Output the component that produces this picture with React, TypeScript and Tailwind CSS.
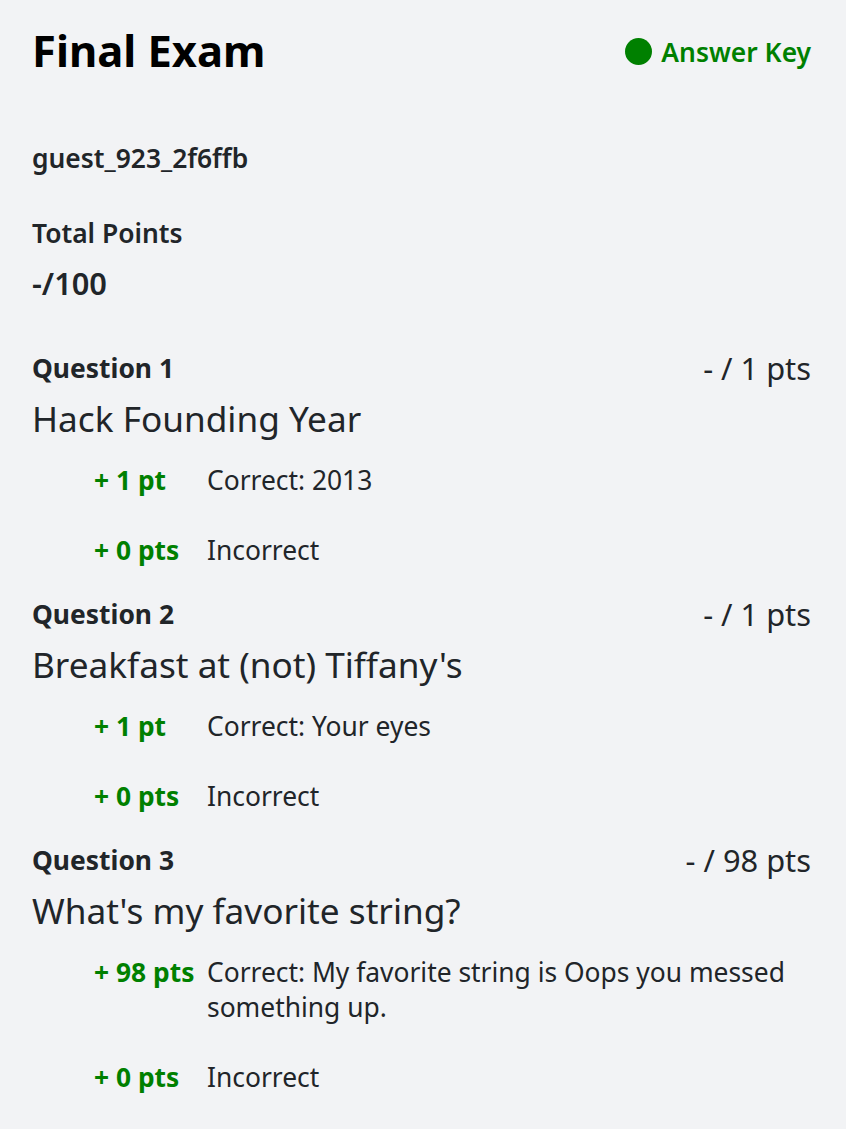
const questions = [
  {
    label: 'Question 1',
    title: 'Hack Founding Year',
    max: '1',
    options: [
      { pts: '+ 1 pt', text: 'Correct: 2013' },
      { pts: '+ 0 pts', text: 'Incorrect' },
    ],
  },
  {
    label: 'Question 2',
    title: "Breakfast at (not) Tiffany's",
    max: '1',
    options: [
      { pts: '+ 1 pt', text: 'Correct: Your eyes' },
      { pts: '+ 0 pts', text: 'Incorrect' },
    ],
  },
  {
    label: 'Question 3',
    title: "What's my favorite string?",
    max: '98',
    options: [
      { pts: '+ 98 pts', text: 'Correct: My favorite string is Oops you messed something up.' },
      { pts: '+ 0 pts', text: 'Incorrect' },
    ],
  },
]

export default function App() {
  return (
    <div
      className="min-h-screen bg-[#f2f3f5] text-[#212529] pl-8 pr-[35px] pt-6 pb-10"
      style={{ fontFamily: '"Noto Sans", "Open Sans", sans-serif' }}
    >
      {/* header */}
      <div className="flex items-center justify-between">
        <h1 className="text-[43.5px] leading-[53px] font-bold text-black">Final Exam</h1>
        <div className="flex items-center gap-[9px] text-[#008000] text-[26.4px] font-semibold leading-[36px] mt-[2px]">
          <span className="w-[27px] h-[27px] rounded-full bg-[#008000]" />
          Answer Key
        </div>
      </div>

      <p className="mt-[68px] text-[26.4px] leading-[26px] font-semibold">guest_923_2f6ffb</p>

      <p className="mt-[49px] text-[26.4px] leading-[26px] font-semibold">Total Points</p>
      <p className="mt-[19px] text-[30.8px] leading-[36px] font-semibold">-/100</p>

      {/* questions */}
      <div className="mt-[49px]">
        {questions.map((q) => (
          <section key={q.label} className="pb-[28px]">
            <div className="flex items-center justify-between leading-[36px]">
              <h3 className="text-[26.4px] font-bold">{q.label}</h3>
              <span className="text-[30.8px]">- / {q.max} pts</span>
            </div>
            <h2 className="mt-[11px] text-[35.2px] leading-[42px]">{q.title}</h2>
            <div className="mt-[24px] flex flex-col gap-[35px] pl-[62px]">
              {q.options.map((o) => (
                <div key={o.pts} className="flex text-[26.4px] leading-[35px]">
                  <span className="w-[113px] shrink-0 font-bold text-[#008000]">{o.pts}</span>
                  <span>{o.text}</span>
                </div>
              ))}
            </div>
          </section>
        ))}
      </div>
    </div>
  )
}
